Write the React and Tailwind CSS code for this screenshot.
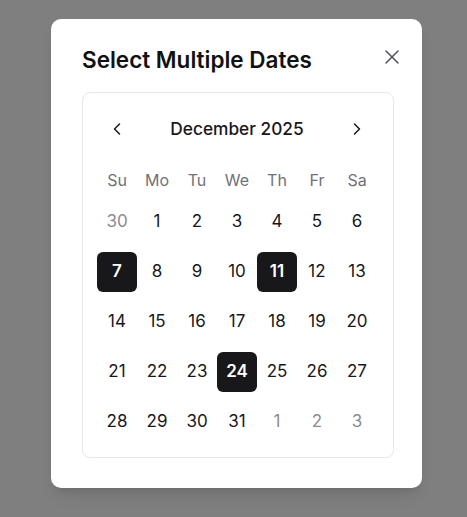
import React from "react";
import { X, ChevronLeft, ChevronRight } from "lucide-react";

const weekdays = ["Su", "Mo", "Tu", "We", "Th", "Fr", "Sa"];

const days = [
  [30, true], [1], [2], [3], [4], [5], [6],
  [7], [8], [9], [10], [11], [12], [13],
  [14], [15], [16], [17], [18], [19], [20],
  [21], [22], [23], [24], [25], [26], [27],
  [28], [29], [30], [31], [1, true], [2, true], [3, true],
];

const selected = new Set([7, 11, 24]);

export default function App() {
  return (
    <div
      className="min-h-screen w-full bg-[#7f7f7f] pt-[19px] pl-[51px]"
      style={{ fontFamily: "Inter, 'Noto Sans', sans-serif" }}
    >
      <div className="relative w-[371px] h-[469px] bg-white rounded-[10px] shadow-lg pt-[27px] pl-[31px]">
        <button className="absolute right-[18px] top-[26px] w-6 h-6 flex items-center justify-center text-[#52525b]">
          <X size={24} strokeWidth={1.5} />
        </button>
        <h2 className="text-[22.5px] leading-[28px] font-semibold text-[#111111]">
          Select Multiple Dates
        </h2>
        <div className="mt-[18px] w-[312px] border border-[#e5e7eb] rounded-lg pl-[14px] pr-[16px] py-[15px]">
          <div className="grid grid-cols-7 h-10 items-center pt-[2px]">
            <div className="flex items-center justify-center text-[#18181b]">
              <ChevronLeft size={20} strokeWidth={1.8} />
            </div>
            <div className="col-span-5 text-center text-[17.3px] font-medium text-[#18181b]">
              December 2025
            </div>
            <div className="flex items-center justify-center text-[#18181b]">
              <ChevronRight size={20} strokeWidth={1.8} />
            </div>
          </div>
          <div className="grid grid-cols-7 mt-[13px] h-10 items-center">
            {weekdays.map((w) => (
              <div key={w} className="text-center text-[16px] text-[#71717a] -mt-[2px]">
                {w}
              </div>
            ))}
          </div>
          <div className="grid grid-cols-7 gap-y-[10px] mt-px">
            {days.map(([d, outside], i) => {
              const sel = !outside && selected.has(d);
              return (
                <div
                  key={i}
                  className={
                    sel
                      ? "h-10 w-10 flex items-center justify-center rounded-md bg-[#18181b] text-white text-[17px] font-semibold"
                      : outside
                      ? "h-10 w-10 flex items-center justify-center text-[17px] text-[#8b8b93]"
                      : "h-10 w-10 flex items-center justify-center text-[17px] text-[#18181b]"
                  }
                >
                  {d}
                </div>
              );
            })}
          </div>
        </div>
      </div>
    </div>
  );
}
